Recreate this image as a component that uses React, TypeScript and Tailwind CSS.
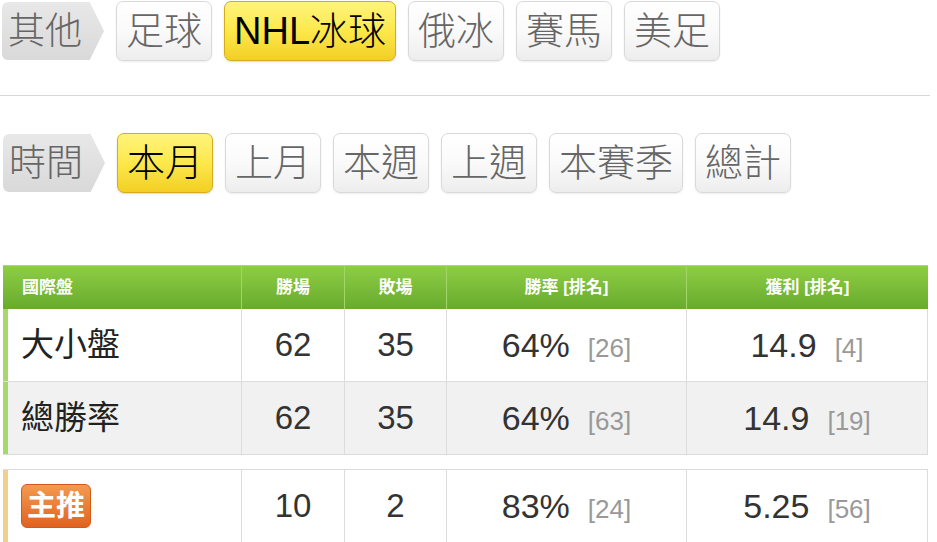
import React from 'react';

const FONT = "font-['Liberation_Sans','Noto_Sans_CJK_TC',sans-serif]";

function Label({ text }: { text: string }) {
  return (
    <div className="relative flex h-[58px] w-[102px] items-center rounded-l-[6px] bg-gradient-to-b from-[#e8e8e8] to-[#d9d9d9] pl-[6px] text-[37px] font-light leading-none text-[#666] [clip-path:polygon(0_0,86%_0,100%_50%,86%_100%,0_100%)]">
      {text}
    </div>
  );
}

function Pill({ text, active }: { text: string; active?: boolean }) {
  return (
    <div
      className={
        active
          ? 'flex h-[60px] items-center rounded-[7px] border border-[#d3ad1e] bg-gradient-to-b from-[#fff47a] via-[#fde84a] to-[#f2cf22] px-[9px] text-[38px] font-light leading-none text-black shadow-[0_1px_2px_rgba(0,0,0,0.15)]'
          : 'flex h-[60px] items-center rounded-[7px] border border-[#d9d9d9] bg-gradient-to-b from-white via-[#fafafa] to-[#ededed] px-[9px] text-[38px] font-light leading-none text-[#666] shadow-[0_1px_2px_rgba(0,0,0,0.08)]'
      }
    >
      {text}
    </div>
  );
}

function Stat({ value, rank }: { value: string; rank: string }) {
  return (
    <div className="flex items-baseline justify-center gap-[18px]">
      <span className="text-[34px] text-[#333]">{value}</span>
      <span className="text-[26px] text-[#999]">{rank}</span>
    </div>
  );
}

const cell = 'flex items-center justify-center border-r border-[#dcdcdc]';

function Row({
  name,
  win,
  lose,
  rate,
  rateRank,
  profit,
  profitRank,
  gray,
  accent,
}: {
  name: React.ReactNode;
  win: string;
  lose: string;
  rate: string;
  rateRank: string;
  profit: string;
  profitRank: string;
  gray?: boolean;
  accent: string;
}) {
  return (
    <div className={`grid h-[73px] grid-cols-[239px_103px_102px_240px_241px] border-b border-[#dcdcdc] ${gray ? 'bg-[#f1f1f1]' : 'bg-white'}`}>
      <div className={`flex items-center border-r border-[#dcdcdc] border-l-[5px] ${accent} pl-[13px] text-[33px] text-[#222]`}>
        {name}
      </div>
      <div className={`${cell} text-[33px] text-[#333]`}>{win}</div>
      <div className={`${cell} text-[33px] text-[#333]`}>{lose}</div>
      <div className={cell}>
        <Stat value={rate} rank={rateRank} />
      </div>
      <div className={cell}>
        <Stat value={profit} rank={profitRank} />
      </div>
    </div>
  );
}

export default function App() {
  const sports = ['足球', 'NHL冰球', '俄冰', '賽馬', '美足'];
  const times = ['本月', '上月', '本週', '上週', '本賽季', '總計'];

  return (
    <div className={`h-[542px] w-[937px] overflow-hidden bg-white ${FONT}`}>
      <div className="flex items-center gap-[12px] pl-[2px] pt-[1px]">
        <Label text="其他" />
        {sports.map((s) => (
          <Pill key={s} text={s} active={s === 'NHL冰球'} />
        ))}
      </div>

      <div className="mt-[34px] h-px w-[930px] bg-[#d8d8d8]" />

      <div className="mt-[37px] flex items-center gap-[12px] pl-[3px]">
        <Label text="時間" />
        {times.map((t) => (
          <Pill key={t} text={t} active={t === '本月'} />
        ))}
      </div>

      <div className="ml-[3px] mt-[72px] w-[925px]">
        <div className="grid h-[44px] grid-cols-[239px_103px_102px_240px_241px] border-t border-[#a9dc62] bg-gradient-to-b from-[#8ecd45] to-[#68ab2c] text-[17px] font-bold text-white">
          <div className="flex items-center border-r border-[#a2d66a] pl-[19px]">國際盤</div>
          <div className="flex items-center justify-center border-r border-[#a2d66a]">勝場</div>
          <div className="flex items-center justify-center border-r border-[#a2d66a]">敗場</div>
          <div className="flex items-center justify-center border-r border-[#a2d66a]">勝率 [排名]</div>
          <div className="flex items-center justify-center">獲利 [排名]</div>
        </div>
        <Row name="大小盤" win="62" lose="35" rate="64%" rateRank="[26]" profit="14.9" profitRank="[4]" accent="border-l-[#a6d96a]" />
        <Row name="總勝率" win="62" lose="35" rate="64%" rateRank="[63]" profit="14.9" profitRank="[19]" gray accent="border-l-[#a6d96a]" />
        <div className="h-[14px]" />
        <div className="border-t border-[#dcdcdc]">
          <Row
            name={
              <span className="rounded-[6px] border border-[#d0591c] bg-gradient-to-b from-[#f39a4e] to-[#e0621f] px-[5px] py-[3px] text-[29px] font-bold leading-[36px] text-white">
                主推
              </span>
            }
            win="10"
            lose="2"
            rate="83%"
            rateRank="[24]"
            profit="5.25"
            profitRank="[56]"
            accent="border-l-[#f3d089]"
          />
        </div>
      </div>
    </div>
  );
}
